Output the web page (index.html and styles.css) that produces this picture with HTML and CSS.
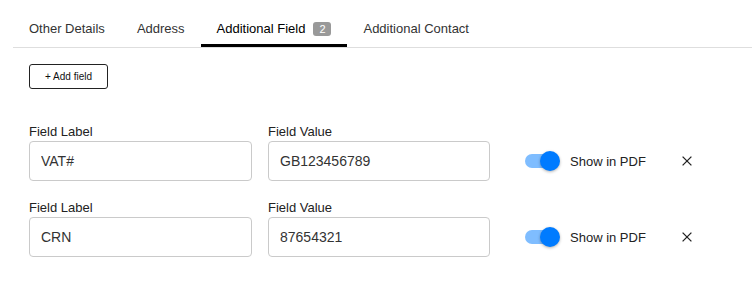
FILE: index.html
```html
<!DOCTYPE html>
<html lang="en">
<head>
<meta charset="utf-8">
<title>Additional Field</title>
<link rel="stylesheet" href="styles.css">
</head>
<body>
<nav class="tabs">
  <div class="tab">Other Details</div>
  <div class="tab">Address</div>
  <div class="tab active">Additional Field <span class="badge">2</span></div>
  <div class="tab">Additional Contact</div>
</nav>
<main class="content">
  <button class="add-btn" type="button">+ Add field</button>
  <div class="rows">
    <div class="row">
      <div class="field">
        <label class="field-label">Field Label</label>
        <input class="field-input" type="text" value="VAT#">
      </div>
      <div class="field">
        <label class="field-label">Field Value</label>
        <input class="field-input" type="text" value="GB123456789">
      </div>
      <div class="pdf">
        <span class="switch"><span class="track"></span><span class="thumb"></span></span>
        <span class="pdf-label">Show in PDF</span>
        <button class="remove" type="button" aria-label="Remove">
          <svg width="10" height="10" viewBox="0 0 10 10"><path d="M0.6 0.6 L9.4 9.4 M9.4 0.6 L0.6 9.4" stroke="#222" stroke-width="1.3" fill="none"/></svg>
        </button>
      </div>
    </div>
    <div class="row">
      <div class="field">
        <label class="field-label">Field Label</label>
        <input class="field-input" type="text" value="CRN">
      </div>
      <div class="field">
        <label class="field-label">Field Value</label>
        <input class="field-input" type="text" value="87654321">
      </div>
      <div class="pdf">
        <span class="switch"><span class="track"></span><span class="thumb"></span></span>
        <span class="pdf-label">Show in PDF</span>
        <button class="remove" type="button" aria-label="Remove">
          <svg width="10" height="10" viewBox="0 0 10 10"><path d="M0.6 0.6 L9.4 9.4 M9.4 0.6 L0.6 9.4" stroke="#222" stroke-width="1.3" fill="none"/></svg>
        </button>
      </div>
    </div>
  </div>
</main>
</body>
</html>
```
FILE: styles.css
```css
* { box-sizing: border-box; }
body {
  margin: 0;
  background: #fff;
  font-family: "Liberation Sans", Arial, Helvetica, sans-serif;
  color: #222;
}
.tabs {
  display: flex;
  margin-left: 13px;
  padding-top: 13px;
  border-bottom: 1px solid #dedede;
}
.tab {
  display: flex;
  align-items: center;
  padding: 8px 16px;
  font-size: 13px;
  line-height: 15px;
  color: #333;
  border-bottom: 3px solid transparent;
}
.tab.active {
  color: #000;
  border-bottom-color: #000;
}
.badge {
  display: inline-block;
  margin-left: 8px;
  width: 18px;
  height: 14px;
  line-height: 14px;
  text-align: center;
  font-size: 11px;
  color: #fff;
  background: #999;
  border-radius: 3px;
}
.content {
  padding: 16px 0 0 29px;
}
.add-btn {
  display: block;
  width: 79px;
  height: 25px;
  padding: 0;
  text-align: center;
  font-family: "Liberation Sans", Arial, sans-serif;
  font-size: 10px;
  color: #111;
  background: #fff;
  border: 1px solid #222;
  border-radius: 3px;
}
.rows {
  margin-top: 35px;
  display: flex;
  flex-direction: column;
  gap: 19px;
}
.row {
  display: grid;
  grid-template-columns: 223px 222px auto;
  column-gap: 16px;
  align-items: end;
}
.field { display: flex; flex-direction: column; }
.field-label {
  font-size: 13px;
  line-height: 16px;
  margin-bottom: 1px;
  color: #222;
}
.field-input {
  width: 100%;
  height: 40px;
  padding: 0 11px;
  font-family: "Liberation Sans", Arial, sans-serif;
  font-size: 14px;
  color: #333;
  border: 1px solid #cacaca;
  border-radius: 4px;
  background: #fff;
  outline: none;
}
.pdf {
  height: 40px;
  display: flex;
  align-items: center;
  margin-left: 19px;
}
.switch {
  position: relative;
  width: 35px;
  height: 20px;
  flex: none;
}
.track {
  position: absolute;
  left: 0;
  top: 3px;
  width: 34px;
  height: 14px;
  border-radius: 7px;
  background: #007bff;
  opacity: 0.5;
}
.thumb {
  position: absolute;
  left: 15px;
  top: 0;
  width: 20px;
  height: 20px;
  border-radius: 50%;
  background: #007bff;
  box-shadow: 0 1px 3px rgba(0,0,0,0.3);
}
.pdf-label {
  margin-left: 10px;
  font-size: 13px;
  color: #222;
}
.remove {
  margin-left: 31px;
  width: 20px;
  height: 20px;
  padding: 0;
  border: none;
  background: transparent;
  display: flex;
  align-items: center;
  justify-content: center;
}
```
